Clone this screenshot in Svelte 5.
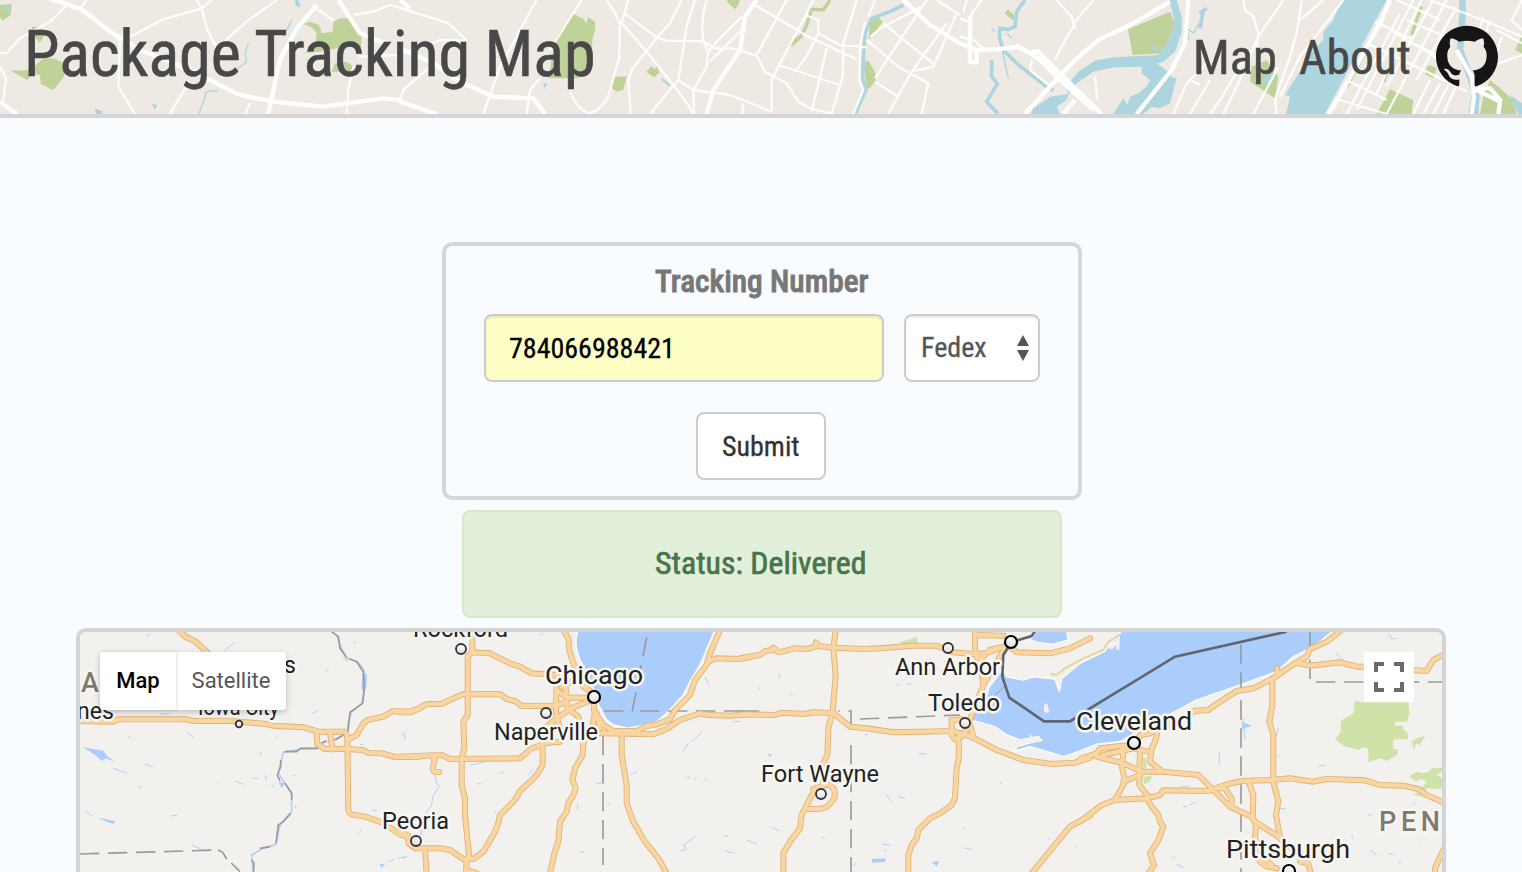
<script>
  // Squeezes a label horizontally so that it takes exactly the given width.
  function fit(node, width) {
    const natural = node.offsetWidth;
    node.style.transform = `scaleX(${width / natural})`;
    node.parentElement.style.width = `${width}px`;
  }

  // Header streets, in thirds of a pixel from the left edge of each sheet.
  const streets = [
    { x: 0, d: 'M260 0L240 25L265 40M195 15L150 0M0 160L22 158L60 115L150 65L200 15M0 200L18 235L10 300M350 120L400 105L490 58L605 25L635 0M590 0L605 25L620 85L650 145L740 65L830 0M360 125L355 260L405 342M570 240L510 342M750 310L735 342M1040 342L1045 270L1060 200M1060 45L1120 35L1170 15L1240 35M940 20L1000 60M1075 170L1200 165L1320 120L1400 122M1610 0L1500 200L1450 342M1745 0L1650 150M1620 235L1590 270L1580 342M1200 25L1300 55L1345 70L1400 120M1290 200L1210 270L1200 300' },
    { x: 1680, d: 'M140 0L165 40L180 68L178 170L145 290Q120 335 85 340Q50 325 30 275M205 0L185 68L260 155L340 255L385 315L400 342M190 38L290 112L320 122L430 124L465 145L520 145L590 167L615 215L680 250L715 305L750 325L820 342M365 0L330 70L290 115L215 210L205 240L212 342M405 0L380 80L372 130L355 240L270 342M440 0Q420 60 430 124L445 155L440 200L400 270L402 342M355 240L400 270L510 285L635 335M548 310V342M545 50L470 125L445 155M550 85L450 185M585 15L745 110L890 178M680 0L590 165M655 195L840 255M735 45L775 60L775 100L840 135L920 142M775 100L745 160L710 210M760 0L730 60L660 190L635 240V335M800 145L780 230L755 335M890 0L850 130L848 230L815 342M915 65L900 140L898 240L910 270L880 342M920 120L1015 200L1105 250L1085 342M970 70L1125 195M945 245L1015 290M930 110L970 80L1085 20M1100 0L1060 60L945 235M1190 40L1120 200L1055 215L985 342M1160 70L1055 215M1130 0L1200 45M945 0L925 50' },
    { x: 2880, d: 'M0 55L25 65M20 0L10 40M65 0L35 40L30 110M0 110L40 120L70 145M290 0L335 50L345 85M345 70L310 130L285 180M400 0L345 65M215 180L210 210L265 255M405 230L412 300M690 240L720 255M750 180L680 250L640 342M750 240L690 342' },
    { x: 3600, d: 'M130 0L135 30L160 50L175 100L170 160M150 150L60 300L30 342M250 0L175 110L115 250L70 342M305 0L290 100L270 170L225 300L230 342M370 0L300 60M430 0L400 40L300 170L240 290M235 200L160 342M600 40L440 342M640 0L470 330M665 0L530 280M700 0L560 260M740 0L640 190L560 342M770 20L650 240M690 240L640 342M720 250L670 342M745 255L700 342M770 255L730 342M590 0L700 50L720 60M690 0L860 65L966 110M525 65L640 120M500 130L680 215L800 275M640 130L720 170M420 300L560 342M440 240L560 300M850 50L835 100M870 60L850 120M966 0L935 60L966 90M890 90L966 130M895 190L966 165M905 110L870 230M620 60L760 120M570 90L720 180' }
  ];
  const avenues = [
    { x: 0, d: 'M165 0L245 28L330 95L420 150L520 190L620 235L720 285L820 305L970 320L1150 295L1200 300M950 15L890 85L840 180L820 270L805 342M1015 0L1080 100L1155 130M1200 0L1230 25M1200 145L1300 190L1370 240L1480 290L1600 295L1635 342M0 305L50 342M1200 305L1310 342' },
    { x: 1680, d: 'M590 0L555 50L540 150L460 270L440 342M1030 0L1110 75L1200 130' },
    { x: 2880, d: 'M30 50L30 185L50 188L50 150M0 130L50 150L110 148L175 140L235 175L300 240L400 330M215 155L235 155L320 240L425 342M195 342L270 260L340 185L415 120L510 75L630 5M685 0L675 130L635 210L530 342M310 342L345 300' },
    { x: 3600, d: 'M570 0L545 60L480 180L400 320L385 342M770 150L815 230L822 290L815 342M820 265L900 305L895 342M905 305L870 265L830 262' }
  ];

  // Map sheets: each is drawn on a grid of thirds of a pixel from its own left edge.
  const highways = [
    { x: 70, d: 'M325 15L345 35L375 48L420 90M25 288L130 290L145 283L350 283L370 288L470 287L590 297L610 302L700 307L745 320L822 320Q832 322 832 345L835 555Q836 563 845 568L885 575L935 592L990 628L1015 636M740 322L741 355L762 371L790 373L820 371L880 375L895 384L935 385L975 396L1050 395M780 322L787 370M835 343L860 330L880 295L895 284L940 275L968 258L1020 260L1050 250' },
    { x: 400, d: 'M0 262L32 262L78 238L125 236L188 208L300 207L320 222L345 228L365 243L470 242M0 395L125 390L150 402L360 400L395 370L425 360L450 340M100 395L104 405L98 430L102 440L118 441M217 15L217 80L203 95L203 270L190 290L193 370L185 400L185 480L195 520L195 570L208 700M217 82L270 85L330 115L360 125L395 145L440 148L470 150M428 360L428 420L410 450L385 475L360 498L345 525L320 550L300 570L295 595L285 620L250 680L220 702L190 702L150 675L120 670L45 670M75 670L80 745M200 700L198 745M200 735L230 745M0 620L25 632L25 655L45 670M550 350L548 390L525 430L517 465L527 490L520 510L505 535L500 560L480 590L475 650L462 690L450 745M665 330L665 390L680 480L680 535L700 590L735 650L775 700L800 745M490 15L505 40L508 75L520 115L550 180L580 210' },
    { x: 400, d: 'M470 150L468 265L482 320M495 170L503 250L535 275L552 350M470 195L500 218L580 218M470 240L500 232M430 312L470 280L515 250L580 222M485 185L515 170M550 185L575 200M580 222L583 260L610 300L640 318L710 318L740 303L770 298L810 283L825 255L870 210L885 165L920 120L928 90L960 15M600 325L680 326L760 328L800 312L840 285L870 275L900 265L925 270L990 272L1050 268M583 270L578 300M590 265L600 310M430 355L480 350M925 110L950 100L1015 102L1050 97M450 340L425 360' },
    { x: 740, d: 'M0 100L60 90L75 78L95 76L100 68L115 82L165 70L200 72L225 65L228 52L235 63L280 68L370 72L420 70L520 62L590 62L640 82L690 86L740 85L790 65M287 15L280 70L287 150L278 260L265 310L262 390L247 420L250 475M0 268L105 270L125 263L195 267L215 262L280 264L330 305L380 310L460 322L545 320L640 318L700 338L770 375L850 405L935 417L1005 413L1050 398M220 492L262 478Q290 485 283 520L262 545L240 552L205 552M228 488L210 520L185 570L180 610L150 650L130 685L130 745M635 285L665 283M635 285L635 330L645 343L665 335L690 300L700 335M657 335L656 400L650 430L645 520L635 540L600 565L570 580L535 615L530 640L515 660L505 690L505 745M680 310L695 270L730 180L765 120L800 60M705 15L705 85L720 110L730 180M705 30L790 32M725 100L750 75L790 65M810 65L830 82L930 85L990 70L1050 40M1050 572L990 605L940 665L875 745' },
    { x: 1080, d: 'M0 402L50 385L60 370L130 362L160 365M170 350L180 330L210 325L260 300L300 285M335 265L340 258L385 255L405 240L470 198L520 190L580 160L645 115L680 95L690 72L740 50L785 15M575 165L592 150L592 130M655 115L690 122L780 112L830 125L860 125M1000 135L1040 138L1060 105L1085 92M577 160L577 240L568 290L580 330L580 470L595 530L588 570L600 640M185 440L250 440L355 450L400 495L450 545L515 575L525 590L595 635L625 665M200 520L240 510L250 496L385 498L440 478L485 468L575 465L630 460L700 470L740 462L855 466L900 480L970 482L1015 492L1040 510L1090 532M505 470L520 510L518 580L528 600L525 640L550 700L575 720M415 490L435 490L455 520L455 545M70 390L160 370L205 380M125 362L130 390L125 420L135 470L105 525M50 395L130 415L185 440M180 385L178 440L178 480L205 515M232 325L225 350L215 370L210 410L245 438M130 470L180 450M0 590L65 540L105 525L200 520L215 545L235 570L240 590L250 605L235 645L210 685L222 720L205 745M660 710L685 715L692 745M540 710L560 725L590 730M1090 675L1065 730L1065 745' }
  ];

  const streams = [
    { x: 70, d: 'M230 35L242 25M345 20L365 35M460 80L495 50M765 138L776 134M728 265L746 256M270 267L302 267M350 320L372 338M172 335L182 338M225 418L250 425M130 430L172 446M205 483L215 490M445 470L450 475M495 468L522 478M550 460L565 459M585 450L590 465M605 478L614 490M570 390L575 380M618 337L624 335M668 452L675 451M303 573L322 571M365 660L392 672M905 556L920 556M866 622L875 616M930 720L945 718M955 712L972 702M985 700L1010 695M1002 325L1005 345M850 55L858 50M45 560L66 572M676 550L678 540M870 358L880 359' },
    { x: 400, d: 'M105 450L108 470L118 485L98 515L95 540L80 560L82 580L68 600L60 640M420 30L430 24M5 332L15 322M232 476L244 476M300 445L312 440M385 450L400 432M210 420L240 415L265 405M540 682L552 680M533 535L533 555M590 475L615 475M690 450L710 440M850 377L865 355M860 455L872 460M885 464L890 458M915 460L918 468M875 350L907 320M1000 290L1020 289M915 155L926 178M620 545L630 535M840 678L860 672L850 660L888 634M970 630L985 635M975 678L1005 685M10 700L20 695M285 565L288 558' },
    { x: 740, d: 'M115 145L120 160M146 205L158 212M55 195L60 185M470 180L480 178M500 175L515 178M535 387L560 386M375 328L384 330M438 507L456 532M475 515L495 520M782 478L785 470M668 615L673 608M673 669L695 673M425 657L450 660M432 674L440 677M340 722L350 714M95 607L118 618M245 637L255 640M20 645L50 657M925 640L932 643M1003 665L1010 666' },
    { x: 1080, d: 'M925 25L935 42L948 40M765 80L785 100L808 130M485 295L490 280M490 290L495 345M418 380L418 420M302 487L328 482M310 545L322 544M330 540L348 530M595 550L618 552M595 310L588 335M592 390L598 396M715 423L735 420M600 730L585 745M275 700L285 695M290 718L310 728M870 675L890 690M925 685L940 690M955 715L965 710M1020 650L1022 655M815 630L818 640M865 570L875 568M1000 530L1005 540M910 240L920 250' }
  ];

  const cities = [
    { name: 'Rockford', x: 413, y: 637, w: 95, s: 24, cx: 461, cy: 649, r: 5 },
    { name: 'Chicago', x: 545, y: 684, w: 98, s: 26.5, cx: 594, cy: 697, r: 6, major: true },
    { name: 'Naperville', x: 494, y: 740, w: 104, s: 24, cx: 546, cy: 713, r: 5 },
    { name: 'Peoria', x: 382, y: 829, w: 67, s: 24, cx: 416, cy: 841, r: 5 },
    { name: 'Iowa City', x: 198, y: 715, w: 81, s: 22, cx: 239, cy: 724, r: 3.3 },
    { name: 'Fort Wayne', x: 761, y: 782, w: 118, s: 24, cx: 821, cy: 794, r: 5 },
    { name: 'Ann Arbor', x: 895, y: 675, w: 105, s: 24, cx: 948, cy: 648, r: 5 },
    { name: 'Toledo', x: 928, y: 711, w: 72, s: 24, cx: 965, cy: 723, r: 5 },
    { name: 'Cleveland', x: 1076, y: 730, w: 116, s: 26.5, cx: 1134, cy: 743, r: 6, major: true },
    { name: 'Pittsburgh', x: 1226, y: 858, w: 124, s: 26.5, cx: 1289, cy: 871, r: 6, major: true }
  ];
</script>

<header>
  <svg class="streets" width="1522" height="114" viewBox="0 0 1522 114" aria-hidden="true">
    <g transform="scale(.33333)">
      <g class="park">
        <path d="M0 15L35 12L32 45L8 62L0 52ZM95 80L115 80L138 98L120 128L104 112ZM32 212L90 210L130 175L160 175L195 190L192 230L160 270L122 252L120 225L95 222L82 240ZM910 72L930 65L958 75L965 100L998 95L1000 65L1020 55L1045 55L1085 110L1082 150L1050 140L1015 145L955 155L910 160L945 145L950 100L935 82ZM1005 190L1040 185L1055 195L1060 215L995 215Z" />
        <path d="M1720 42L1752 58L1758 70L1765 52L1785 65L1785 95L1778 115L1775 150L1760 195L1735 235L1645 235L1665 120L1680 95ZM1838 230L1880 230L1870 270L1850 275L1832 262ZM1938 215L1955 198L1962 208L1972 200L1978 218L1962 232ZM2180 0L2220 0L2215 15L2205 28L2185 10ZM2370 125L2405 100L2400 120L2375 140Z" />
        <path d="M3013 40L3024 28L3045 48L3040 62ZM3384 88L3510 35L3525 70L3505 125L3485 160L3398 165ZM2612 60L2635 52L2648 65L2605 120ZM2590 185L2605 182L2625 215L2628 240L2610 265L2600 265Z" />
        <path transform="translate(3600)" d="M150 245L155 200L200 180L235 230L225 295ZM530 342L570 268L640 300L635 342ZM680 200L690 195L710 205L700 235L675 222ZM840 342L850 290L870 240L895 260L940 300L950 342ZM945 150L966 105V160Z" />
      </g>
      <path class="park-line" d="M2490 0L2470 30L2435 28L2420 75L2400 115M4265 20L4250 60L4235 105M4120 110L4095 160L4040 260M4165 210L4150 245" />
      <g class="water">
        <path d="M3508 0L3530 0L3545 50L3545 95L3525 155L3490 185L3440 200L3345 202L3280 215L3230 250L3205 285L3200 262L3215 240L3240 210L3290 180L3345 172L3475 165L3505 125L3525 70Z" />
        <path d="M3092 342L3100 325L3150 290L3205 282L3200 300L3170 320L3180 342ZM3425 200L3470 190L3510 220L3515 232L3530 235L3510 310L3480 325L3455 320L3430 342L3340 342L3370 295L3382 315L3390 290L3415 280L3440 260L3450 240L3425 220Z" />
        <path transform="translate(3600)" d="M425 0L560 0L500 110L450 200L375 342L258 342L270 290L255 285L340 150L370 120L370 95L400 60ZM185 240L205 222L225 232L210 255ZM930 285L966 310V342H955ZM820 290L840 275L835 342H812Z" />
        <path d="M3455 138L3480 142L3468 152L3450 148ZM8 30L30 15L28 35ZM285 325L310 335L300 342L288 342ZM455 312L472 315L465 330ZM1630 250L1642 250L1632 268ZM1985 232L2012 255L2008 260L1985 240Z" />
      </g>
      <path class="river" d="M2710 15L2670 35L2615 55L2595 100L2590 170L2588 235L2598 270L2565 342M3075 0L3050 35L3045 80L3025 88L3000 85L2998 110L3010 150L3050 190L3140 260L3160 270M2975 180L2975 230L2992 252L2960 305L2995 342M3598 40L3620 25M3600 85L3610 30" />
      <path class="river wide" d="M4387 0L4388 40L4380 150L4410 230L4425 280L4415 342" />
      <path class="creek" d="M875 60L850 110M745 130L735 160L740 185L690 225M655 272L620 275L597 342M3000 120L3025 235M3020 100L3035 115M2975 85L2985 95M3565 120L3562 85L3580 100L3598 70" />
      <path class="river" d="M888 0L897 20" />
      {#each streets as part}
        <path class="road" transform="translate({part.x})" d={part.d} />
      {/each}
      {#each avenues as part}
        <path class="road main" transform="translate({part.x})" d={part.d} />
      {/each}
    </g>
  </svg>
  <h1><span class="cell"><span class="narrow" use:fit={572}>Package Tracking Map</span></span></h1>
  <nav>
    <a href="#map"><span class="cell"><span class="narrow" use:fit={84}>Map</span></span></a>
    <a href="#about"><span class="cell"><span class="narrow" use:fit={112}>About</span></span></a>
    <svg class="octocat" viewBox="0 0 24 24" aria-label="GitHub"><path fill="#161415" d="M12 .297c-6.63 0-12 5.373-12 12 0 5.303 3.438 9.8 8.205 11.385.6.113.82-.258.82-.577 0-.285-.01-1.04-.015-2.04-3.338.724-4.042-1.61-4.042-1.61C4.422 18.07 3.633 17.7 3.633 17.7c-1.087-.744.084-.729.084-.729 1.205.084 1.838 1.236 1.838 1.236 1.07 1.835 2.809 1.305 3.495.998.108-.776.417-1.305.76-1.605-2.665-.3-5.466-1.332-5.466-5.93 0-1.31.465-2.38 1.235-3.22-.135-.303-.54-1.523.105-3.176 0 0 1.005-.322 3.3 1.23.96-.267 1.98-.399 3-.405 1.02.006 2.04.138 3 .405 2.28-1.552 3.285-1.23 3.285-1.23.645 1.653.24 2.873.12 3.176.765.84 1.23 1.91 1.23 3.22 0 4.61-2.805 5.625-5.475 5.92.42.36.81 1.096.81 2.22 0 1.606-.015 2.896-.015 3.286 0 .315.21.69.825.57C20.565 22.092 24 17.592 24 12.297c0-6.627-5.373-12-12-12" /></svg>
  </nav>
</header>

<main>
  <form onsubmit={(e) => e.preventDefault()}>
    <div class="label"><span class="cell"><span class="narrow" use:fit={214}>Tracking Number</span></span></div>
    <div class="fields">
      <div class="number"><span class="cell"><span class="narrow" use:fit={166}>784066988421</span></span></div>
      <div class="carrier">
        <span class="cell"><span class="narrow" use:fit={66}>Fedex</span></span>
        <svg width="14" height="26" viewBox="0 0 14 26"><path fill="#555" d="M7 0L13 11H1ZM1 15H13L7 26Z" /></svg>
      </div>
    </div>
    <button type="submit"><span class="cell"><span class="narrow" use:fit={78}>Submit</span></span></button>
  </form>

  <div class="status"><span class="cell"><span class="narrow" use:fit={212}>Status: Delivered</span></span></div>

  <section class="map">
    <svg class="terrain" width="1362" height="240" viewBox="80 632 1362 240">
      <defs>
        <linearGradient id="dot" x2="0" y2="1"><stop offset="0" stop-color="#fff" /><stop offset="1" stop-color="#ddd" /></linearGradient>
      </defs>
      <rect x="80" y="632" width="1362" height="240" fill="#f2f1ee" />
      <g transform="translate(400 625) scale(.33333)">
        <path class="lake" d="M535 15C520 45 530 90 548 120L580 190L598 245L620 285L640 300L685 310L730 300L770 290L800 265L850 210L870 170L900 120L930 50L945 15Z" />
      </g>
      <g transform="translate(740 625) scale(.33333)">
        <path class="lake" d="M790 130L800 155L850 165L880 155L945 162L958 200L965 160L1020 115L1095 78L1100 70L1145 18L1780 18L1720 65L1660 95L1610 140L1500 180L1370 225L1290 268L1200 315L1140 350L1070 358L1020 378L970 395L920 380L870 365L825 378L830 365L870 353L905 346L895 335L840 345L800 330L765 305L710 290L690 285L695 272L715 255L740 215L745 190ZM870 45L890 18H980L985 45L940 58L895 53Z" />
        <path fill="#f2f1ee" d="M912 240L922 235L928 263L912 262ZM820 350L870 338L868 325L878 335L902 340L898 350L850 356ZM1095 68L1122 50L1140 30L1138 74L1130 75L1128 60L1118 72Z" />
        <path class="green" d="M475 52L505 45L530 35L535 55L500 60Z" />
        <path class="pond" d="M396 702L437 700L436 710L396 713ZM575 712L597 708L590 724ZM78 385L95 390L92 396Z" />
        <path fill="none" stroke="#e7d39e" stroke-width="6" d="M932 147L950 150L975 130L1030 100L1090 75L1105 50L1140 28" />
      </g>
      <g transform="translate(1080 625) scale(.33333)">
        <path class="green" d="M825 226L845 232L985 232L988 260L982 290L945 290L945 302L970 302L970 313L984 325L984 343L960 342L940 345L940 372L953 372L952 390L920 408L900 400L866 412L864 370L845 368L842 375L795 365L765 342L782 320L782 288L820 265ZM997 348L1010 340L1036 332L1018 363L1010 355L1000 375ZM987 455L1010 440L1030 445L1050 438L1055 430L1088 428L1088 442L1068 448L1088 460L1088 490L1060 492L1040 488L1030 515L1000 510L1020 495L1040 470L1020 462L1010 470ZM190 400L198 398L200 425L190 435ZM190 455L215 452L210 470L192 478Z" />
        <path class="pond" d="M488 290L516 303L498 308L485 315Z" />
      </g>
      <g transform="translate(70 625) scale(.33333)">
        <path class="pond" d="M40 367L100 377L110 392L135 410L108 400L95 408L75 390ZM82 578L135 588L130 597L105 588ZM877 145L890 148L890 180L882 205L874 190ZM928 716L942 720L935 730ZM625 470L645 475L635 490Z" />
        <path class="riverside" d="M800 30L812 65L830 98L865 112L882 135L883 190L875 235L845 262L835 290L832 325L790 345L750 355L735 370L690 372L640 382L625 445L645 475L665 505L665 560L630 600L618 658L580 670L545 690L550 745" />
        <path class="state" d="M783 18L805 35L810 70L830 98L860 110L880 140L883 190L878 235L840 262L833 325M820 330L795 345M768 347L755 355M745 370L692 370L680 380L645 380M632 405L632 425L622 450L630 468M645 475L665 505V525M662 565L640 590L625 600L618 655M600 665L570 670M545 705L552 715L550 745" />
        <path class="state long" d="M30 687L445 675" />
        <path class="state" d="M445 675L458 682L470 702M484 714L510 740" />
        <path class="green" d="M815 95L840 98L832 110Z" />
      </g>
      {#each streams as part}
        <path class="stream" transform="translate({part.x} 625) scale(.33333)" d={part.d} />
      {/each}
      <path class="state long" transform="translate(400 625) scale(.33333)" d="M609 333V720M740 37L720 140L697 258H610M720 258H1040" />
      <path class="state long" transform="translate(740 625) scale(.33333)" d="M333 360V745M333 308V258H295M360 282L660 270M0 258H80" />
      <path class="state long" transform="translate(1080 625) scale(.33333)" d="M483 58V745M690 20V165M708 171H1090" />
      <path fill="none" stroke="#999" stroke-width="1" d="M983 706L1004 687" />
      {#each highways as part}
        <path class="casing" transform="translate({part.x} 625) scale(.33333)" d={part.d} />
      {/each}
      {#each highways as part}
        <path class="highway" transform="translate({part.x} 625) scale(.33333)" d={part.d} />
      {/each}
      <path class="border" transform="translate(740 625) scale(.33333)" d="M888 15L875 33L835 45L812 55L790 90L787 155L808 218L912 289L990 289L1050 250L1305 95L1640 20" />
      {#each cities as c}
        <circle cx={c.cx} cy={c.cy} r={c.r} fill="url(#dot)" stroke={c.major ? '#000' : '#333'} stroke-width={c.major ? 2.2 : 1.8} />
        <text x={c.x} y={c.y} font-size={c.s} textLength={c.w} lengthAdjust="spacingAndGlyphs">{c.name}</text>
      {/each}
      <circle cx="1011" cy="642" r="6" fill="url(#dot)" stroke="#000" stroke-width="2.2" />
      <text x="77" y="719" font-size="23">nes</text>
      <text x="284" y="673" font-size="23">s</text>
      <text class="region" x="81" y="692" font-size="27">A</text>
      <text class="region" x="1379" y="831" font-size="27" textLength="61">PEN</text>
    </svg>
    <div class="types">
      <span class="active"><b>Map</b></span>
      <span>Satellite</span>
    </div>
    <div class="full">
      <svg width="32" height="32" viewBox="0 0 32 32"><path fill="none" stroke="#6a6a6a" stroke-width="4" d="M3 11V3H11M21 3H29V11M29 21V29H21M11 29H3V21" /></svg>
    </div>
  </section>
</main>

<style>
  :global(body) { margin: 0; background: #f9fcff; overflow: hidden; }
  header, main { font-family: "Roboto Condensed", Roboto, sans-serif; box-sizing: border-box; }
  header { position: relative; height: 118px; border-bottom: 4px solid #d4d5d6; background: #eeeae3; display: flex; justify-content: space-between; align-items: flex-start; padding: 0 24px; color: #484848; }
  .streets { position: absolute; left: 0; top: 0; }
  .park path { fill: #bfd29a; }
  .park-line { fill: none; stroke: #bfd29a; stroke-width: 10; }
  .water path { fill: #add5e0; }
  .river, .creek { fill: none; stroke: #add5e0; stroke-width: 11; }
  .river.wide { stroke-width: 20; }
  .creek { stroke-width: 4; }
  .road { fill: none; stroke: #fff; stroke-width: 7; stroke-linejoin: round; stroke-opacity: .88; }
  .road.main { stroke-width: 13; stroke-opacity: 1; }
  .cell { display: inline-block; text-align: left; white-space: nowrap; }
  .narrow { display: inline-block; transform-origin: left center; font-stretch: condensed; }
  h1 { position: relative; margin: 0; padding-top: 17px; font-size: 64px; line-height: 76px; font-weight: 400; -webkit-text-stroke: .6px; }
  nav { position: relative; display: flex; align-items: flex-start; font-size: 48px; line-height: 60px; padding-top: 28px; gap: 24px; -webkit-text-stroke: .5px; }
  nav a { color: inherit; text-decoration: none; display: block; }
  nav a:last-of-type { margin-left: -2px; margin-right: 1px; }
  .octocat { width: 62px; height: 62px; display: block; margin-top: -3px; }
  main { display: flex; flex-direction: column; align-items: center; padding-top: 124px; }
  form { box-sizing: border-box; width: 640px; height: 258px; margin-left: 2px; border: 4px solid #d6d7d9; border-radius: 10px; display: flex; flex-direction: column; align-items: center; padding-top: 14px; }
  .label { font-size: 32px; line-height: 42px; margin-left: -1px; font-weight: 500; color: #777; -webkit-text-stroke: .8px; }
  .fields { display: flex; gap: 20px; margin-top: 12px; }
  .number, .carrier, button { box-sizing: border-box; height: 68px; border: 2px solid #ccc; border-radius: 8px; font-size: 28px; line-height: 66px; background: #fff; -webkit-text-stroke: .3px; }
  .number { width: 400px; padding-left: 23px; color: #000; background: #fdffc4; box-shadow: inset 0 2px 2px rgba(0, 0, 0, .075); }
  .carrier { width: 136px; padding: 0 8px 0 15px; color: #555; box-shadow: inset 0 2px 2px rgba(0, 0, 0, .075); display: flex; align-items: center; justify-content: space-between; }
  button { width: 130px; margin: 30px 2px 0 0; padding: 0; font-family: inherit; color: #333; }
  .status { box-sizing: border-box; width: 600px; height: 108px; margin: 10px 0 0 2px; padding-right: 2px; border: 2px solid #d6e9c6; border-radius: 8px; background: #e2efda; color: #48754a; font-size: 32px; line-height: 102px; font-weight: 400; -webkit-text-stroke: .7px; text-align: center; }
  .map { position: relative; box-sizing: border-box; width: 1370px; height: 244px; margin-top: 10px; border: 4px solid #d4d4d4; border-bottom: 0; border-radius: 10px 10px 0 0; overflow: hidden; font-family: Roboto, sans-serif; }
  .terrain { display: block; }
  .lake, .pond { fill: #abcdfb; }
  .lake { stroke: #f8f8f6; stroke-width: 5; }
  .green { fill: #cfe3a8; }
  .stream { fill: none; stroke: #b3d1f7; stroke-width: 3; }
  .riverside { fill: none; stroke: #b3d1f7; stroke-width: 5; }
  .state { fill: none; stroke: #9b9b9b; stroke-width: 5; }
  .long { stroke-dasharray: 58 26; }
  .casing, .highway { fill: none; stroke-linejoin: round; stroke-linecap: round; }
  .casing { stroke: #dfb173; stroke-width: 18; }
  .highway { stroke: #f9d5a1; stroke-width: 13; }
  .border { fill: none; stroke: #606571; stroke-width: 8; }
  text { font-family: Roboto, sans-serif; fill: #222; stroke: #f7f6f3; stroke-width: 5px; stroke-linejoin: round; paint-order: stroke; }
  .region { fill: #7f7a70; font-weight: 500; }
  .types { position: absolute; left: 20px; top: 20px; display: flex; height: 58px; border-radius: 4px; background: #fff; box-shadow: 0 2px 6px rgba(0, 0, 0, .22); font-size: 22px; line-height: 57px; color: #565656; }
  .types span { width: 110px; text-align: center; }
  .types .active { width: 76px; color: #000; box-shadow: 1px 0 3px rgba(0, 0, 0, .12); }
  .types b { font-weight: 500; }
  .full { position: absolute; left: 1284px; top: 20px; width: 50px; height: 50px; background: #fff; display: grid; place-items: center; }
</style>
